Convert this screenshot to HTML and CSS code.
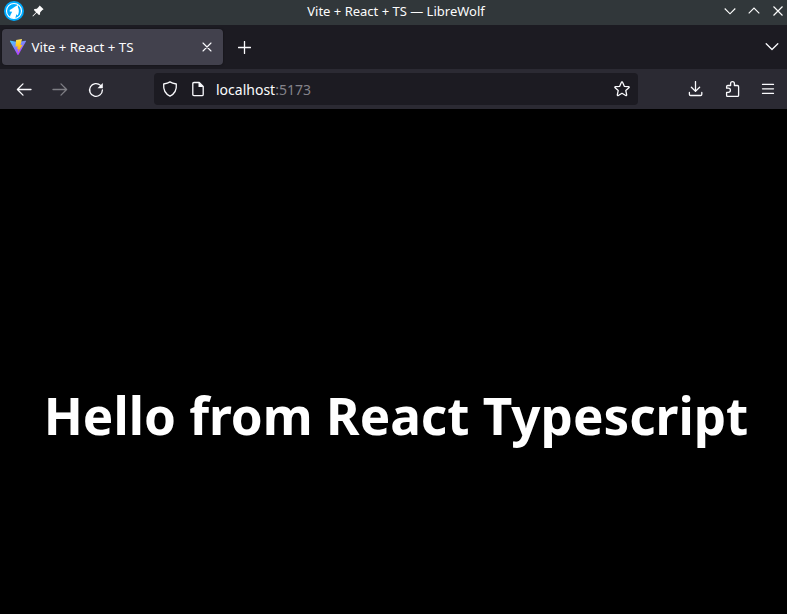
FILE: index.html
```html
<!DOCTYPE html>
<html lang="en">
<head>
<meta charset="utf-8">
<title>Vite + React + TS</title>
<link rel="stylesheet" href="styles.css">
</head>
<body>
<div class="window">
  <header class="titlebar">
    <div class="title-left">
      <svg class="wolf" width="20" height="20" viewBox="0 0 20 20"><circle cx="10" cy="10" r="10" fill="#00acff"/><circle cx="10" cy="10" r="7.5" fill="none" stroke="#fff" stroke-width="1.1"/><path d="M6 16.2C6.2 14 7.3 12.3 8.2 10.8L5.6 10.4 5.8 9.1 8.7 7.2 11.2 5.4 13.9 4 13.9 6.2C15.2 8.5 15.2 11.5 13.8 14.6L12.4 13.2 11.3 17H8Z" fill="#fff"/></svg>
      <svg width="12" height="12" viewBox="0 0 12 12"><path d="M7.7.4 11.6 4.3 10.4 5 8.2 7.2 7.9 9.8 6.9 10 4.7 7.8 1 11.5.4 11 4.1 7.2 1.9 5 2.4 4 4.9 3.8 7 1.6Z" fill="#fcfcfc"/></svg>
    </div>
    <div class="window-title">Vite + React + TS — LibreWolf</div>
    <div class="window-buttons">
      <svg width="12" height="12" viewBox="0 0 12 12"><path d="M.7 3.5 6 8.8 11.3 3.5"/></svg>
      <svg width="12" height="12" viewBox="0 0 12 12"><path d="M.7 8.3 6 3 11.3 8.3"/></svg>
      <svg width="12" height="12" viewBox="0 0 12 12"><path d="m1.5 1.5 9 9m0-9-9 9"/></svg>
    </div>
  </header>
  <nav class="tabs">
    <div class="tab">
      <svg width="16" height="16" viewBox="0 0 32 32"><defs><linearGradient id="v" x1="0" y1="0" x2=".6" y2="1"><stop stop-color="#41d1ff"/><stop offset="1" stop-color="#bd34fe"/></linearGradient><linearGradient id="b" x1="0" y1="0" x2="0" y2="1"><stop stop-color="#ffea83"/><stop offset=".15" stop-color="#ffdd35"/><stop offset="1" stop-color="#ffa800"/></linearGradient></defs><path d="M31.8 5.1 17 31.4a1.1 1.1 0 0 1-2 0L.2 5.1a1 1 0 0 1 1.2-1.6L16 6.1l14.7-2.6a1 1 0 0 1 1.1 1.6Z" fill="url(#v)"/><path d="M24 .1 12.2 2.2 11 15.5l4.3-.8-.9 5.6 2.9-.8-1.6 7.3 9.6-15.3-4.4.8Z" fill="url(#b)"/></svg>
      <span class="tab-label">Vite + React + TS</span>
      <svg class="line close" width="10" height="10" viewBox="0 0 10 10"><path d="m1 1 8 8m0-8-8 8"/></svg>
    </div>
    <svg class="line plus" width="13" height="13" viewBox="0 0 13 13"><path d="M6.5.5v12M.5 6.5h12"/></svg>
    <svg class="line all-tabs" width="14" height="10" viewBox="0 0 14 10"><path d="m1.2 1.8 5.8 5.7 5.8-5.7"/></svg>
  </nav>
  <div class="toolbar">
    <div class="navigation">
      <svg class="line" width="16" height="16" viewBox="0 0 16 16"><path d="M15 7.5H1.5M7 1.9 1.4 7.5 7 13.1"/></svg>
      <svg class="line disabled" width="16" height="16" viewBox="0 0 16 16"><path d="M1 7.5h13.5M9 1.9 14.6 7.5 9 13.1"/></svg>
      <svg class="line" width="16" height="16" viewBox="0 0 16 16"><path d="M12.5 3.4A6.4 6.4 0 1 0 14.4 8"/><path d="M14.8.9v5.3H9.5Z" fill="#fbfbfe" stroke="none"/></svg>
    </div>
    <div class="urlbar">
      <svg class="line" width="16" height="16" viewBox="0 0 16 16"><path d="M8 .9C6.3 2.1 3.8 2.7 1.7 3c-.5 5.3 1.1 9.6 6.3 12.1 5.2-2.5 6.8-6.8 6.3-12.1C12.2 2.7 9.7 2.1 8 .9Z"/></svg>
      <svg class="line page" width="12" height="16" viewBox="0 0 12 16"><path d="M2 1.5h5.2l4 4v7.9c0 .8-.4 1.2-1.2 1.2H2c-.8 0-1.2-.4-1.2-1.2V2.7c0-.8.4-1.2 1.2-1.2Z"/><path d="M6.5 1 11.5 6H6.5Z" fill="#fbfbfe" stroke="none"/></svg>
      <div class="address">localhost<span>:5173</span></div>
      <svg class="line" width="16" height="16" viewBox="0 0 16 16"><path d="M8 1c.3 0 .6.2.7.5l1.6 3.8 4.1.3c.8.1 1 .8.5 1.2l-3.1 2.8.9 4.2c.1.7-.4 1.1-1 .7L8 12.3l-3.7 2.2c-.6.4-1.1 0-1-.7l.9-4.2-3.1-2.8c-.5-.4-.3-1.1.5-1.2l4.1-.3 1.6-3.8C7.4 1.2 7.7 1 8 1Z"/></svg>
    </div>
    <div class="actions">
      <svg class="line" width="16" height="16" viewBox="0 0 16 16"><path d="M7.5.6v9.8M3.4 6.3l4.1 4.1 4.1-4.1M1.4 11.5v1.8c0 .8.4 1.2 1.2 1.2h10c.8 0 1.2-.4 1.2-1.2v-1.8"/></svg>
      <svg class="line" width="16" height="16" viewBox="0 0 16 16"><path d="M1.6 7.2V5.7c0-.8.4-1.2 1.2-1.2h2.8V2.6a1.9 1.9 0 0 1 3.8 0v1.9h3c.8 0 1.2.4 1.2 1.2v8.6c0 .8-.4 1.2-1.2 1.2H2.8c-.8 0-1.2-.4-1.2-1.2v-2.9h1.7a2.1 2.1 0 0 0 0-4.2Z"/></svg>
      <svg class="line menu" width="14" height="12" viewBox="0 0 14 12"><path d="M1.5 1.4h11M1.5 5.8h11M1.5 10.4h11"/></svg>
    </div>
  </div>
  <main class="page-content"><h1>Hello from React Typescript</h1></main>
</div>
</body>
</html>
```
FILE: styles.css
```css
* { box-sizing: border-box; }
body { margin: 0; background: #000; color: #fbfbfe; font-family: "Noto Sans", sans-serif; }
svg { display: block; flex: none; }
.window { height: 614px; display: flex; flex-direction: column; overflow: hidden; }
.titlebar { height: 25px; flex: none; display: grid; grid-template-columns: 100px 1fr 100px; align-items: center; background: #31373a; padding: 0 3px 3px 4px; }
.title-left { display: flex; align-items: center; gap: 8px; }
.window-title { text-align: center; font-size: 13px; line-height: 20px; color: #fcfcfc; padding-left: 4px; }
.window-buttons { display: flex; justify-content: flex-end; gap: 12px; }
.window-buttons path { fill: none; stroke: #fcfcfc; stroke-width: 1.15; }
.line { fill: none; stroke: #fbfbfe; stroke-width: 1.3; stroke-linecap: round; stroke-linejoin: round; }
.tabs { height: 44px; flex: none; display: flex; align-items: center; background: #1c1b22; padding: 0 8px 0 2px; }
.tab { width: 221px; height: 36px; display: flex; align-items: center; background: #42414d; border-radius: 4px; padding: 0 11px 0 8px; box-shadow: 0 0 2px #0008; }
.tab-label { flex: 1; margin-left: 5.5px; font-size: 13.33px; line-height: 20px; }
.close { stroke-width: 1.1; }
.plus { margin-left: 15px; margin-top: 1px; }
.all-tabs { margin-left: auto; }
.toolbar { height: 40px; flex: none; display: flex; align-items: center; background: #2b2a33; padding: 0 12px 0 16px; }
.navigation { display: flex; gap: 20px; margin-top: 1px; }
.disabled { opacity: .4; }
.urlbar { width: 484px; height: 32px; margin-left: 50px; border-radius: 4px; background: #1c1b22; display: flex; align-items: center; padding: 0 8px; }
.page { margin-left: 14px; }
.address { flex: 1; margin-left: 12px; padding-top: 2px; font-size: 14px; line-height: 20px; }
.address span { color: #84838a; }
.actions { flex: 1; display: flex; align-items: center; justify-content: flex-end; gap: 21px; }
.menu { margin-left: -1px; stroke-width: 1.3; }
.page-content { flex: 1; display: flex; align-items: center; justify-content: center; padding: 107px 0 0 5px; }
h1 { margin: 0; color: #fff; font-size: 51.2px; line-height: 1.1; font-weight: 700; white-space: nowrap; }
```
